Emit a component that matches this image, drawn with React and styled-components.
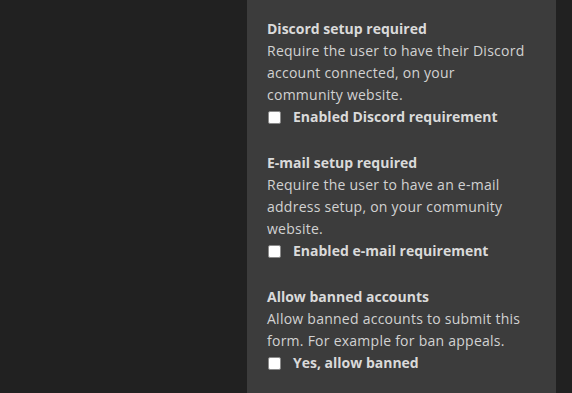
import React from "react";
import styled, { createGlobalStyle } from "styled-components";

const Global = createGlobalStyle`
  html, body { margin: 0; padding: 0; background: #212121; height: 100%; }
  #root { height: 100%; }
`;

const Page = styled.div`
  display: flex;
  height: 393px;
  background: #212121;
  padding-left: 247px;
  box-sizing: border-box;
  overflow: hidden;
`;

const Panel = styled.div`
  width: 309px;
  background: #3c3c3c;
  padding: 18px 27px 0 20px;
  box-sizing: border-box;
  display: flex;
  flex-direction: column;
  gap: 24px;
  font-family: "Open Sans", "DejaVu Sans", sans-serif;
  font-size: 14px;
  line-height: 22px;
  color: #d2d2d2;
`;

const Section = styled.div`
  display: flex;
  flex-direction: column;
`;

const Title = styled.div`
  font-weight: 700;
  color: #dadada;
`;

const Desc = styled.div`
  letter-spacing: 0.25px;
`;

const CheckRow = styled.label`
  display: flex;
  align-items: center;
  font-weight: 700;
  color: #dadada;
  white-space: nowrap;
`;

const Box = styled.input`
  appearance: none;
  width: 13px;
  height: 13px;
  margin: 0 12px 0 1px;
  background: #fff;
  border: 1px solid #8a8a8a;
  border-radius: 2px;
`;

const items = [
  {
    title: "Discord setup required",
    desc: "Require the user to have their Discord account connected, on your community website.",
    label: "Enabled Discord requirement",
  },
  {
    title: "E-mail setup required",
    desc: "Require the user to have an e-mail address setup, on your community website.",
    label: "Enabled e-mail requirement",
  },
  {
    title: "Allow banned accounts",
    desc: "Allow banned accounts to submit this form. For example for ban appeals.",
    label: "Yes, allow banned",
  },
];

export default function App() {
  return (
    <>
      <Global />
      <Page>
        <Panel>
          {items.map((it) => (
            <Section key={it.title}>
              <Title>{it.title}</Title>
              <Desc>{it.desc}</Desc>
              <CheckRow>
                <Box type="checkbox" />
                {it.label}
              </CheckRow>
            </Section>
          ))}
        </Panel>
      </Page>
    </>
  );
}
